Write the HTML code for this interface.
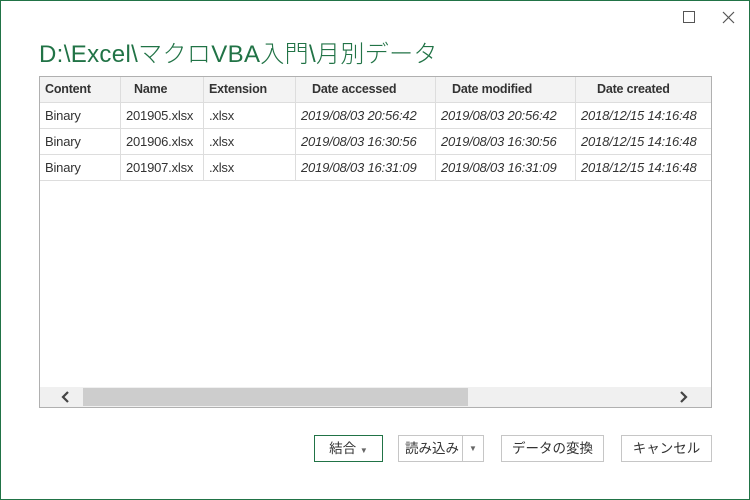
<!DOCTYPE html>
<html><head><meta charset="utf-8"><style>
*{margin:0;padding:0;box-sizing:border-box}
body{width:750px;height:500px;background:#fff;position:relative;overflow:hidden;font-family:"Liberation Sans","Noto Sans CJK JP",sans-serif;font-size:13px;color:#333}
.frame{position:absolute;left:0;top:0;width:750px;height:500px;border:1px solid #217346}
.title{position:absolute;left:39px;top:34px;font-size:24px;color:#217346;font-weight:300;letter-spacing:0.35px;white-space:nowrap}
.max{position:absolute;left:683px;top:11px;width:12px;height:12px;border:1px solid #555}
.tbl{position:absolute;left:39px;top:76px;width:673px;height:332px;border:1px solid #b0b0b0;overflow:hidden}
.row{position:absolute;left:0;height:26px;width:700px;border-bottom:1px solid #ddd}
.c{position:absolute;top:0;height:26px;line-height:25px;border-right:1px solid #ddd;padding-left:5px;white-space:nowrap;overflow:hidden;letter-spacing:-0.2px}
.hd{background:#f3f3f3}
.hd .c{font-weight:bold;color:#333;font-size:12.5px}
i{font-style:italic}
.sb{position:absolute;left:0;bottom:0;width:671px;height:20px;background:#f0f0f0}
.thumb{position:absolute;left:43px;top:1px;width:385px;height:18px;background:#cdcdcd}
.btn{position:absolute;top:435px;height:27px;border:1px solid #c6c6c6;text-align:center;line-height:25px;font-size:13.5px;color:#333;background:#fff}
.tri{font-size:8px;color:#666}
</style></head><body>
<div class="frame"></div>
<div class="max"></div>
<svg style="position:absolute;left:722px;top:11px" width="13" height="13"><path d="M1 1 L12 12 M12 1 L1 12" stroke="#555" stroke-width="1.2" fill="none"/></svg>
<div class="title">D:\Excel\マクロVBA入門\月別データ</div>
<div class="tbl">
<div class="row hd" style="top:0">
<div class="c" style="left:0;width:81px">Content</div>
<div class="c" style="left:81px;width:83px;padding-left:13px">Name</div>
<div class="c" style="left:164px;width:92px">Extension</div>
<div class="c" style="left:256px;width:140px;padding-left:16px">Date accessed</div>
<div class="c" style="left:396px;width:140px;padding-left:16px">Date modified</div>
<div class="c" style="left:536px;width:140px;padding-left:21px">Date created</div>
</div>
<div class="row" style="top:26px">
<div class="c" style="left:0;width:81px">Binary</div><div class="c" style="left:81px;width:83px">201905.xlsx</div><div class="c" style="left:164px;width:92px">.xlsx</div>
<div class="c" style="left:256px;width:140px"><i>2019/08/03 20:56:42</i></div><div class="c" style="left:396px;width:140px"><i>2019/08/03 20:56:42</i></div><div class="c" style="left:536px;width:140px"><i>2018/12/15 14:16:48</i></div></div>
<div class="row" style="top:52px">
<div class="c" style="left:0;width:81px">Binary</div><div class="c" style="left:81px;width:83px">201906.xlsx</div><div class="c" style="left:164px;width:92px">.xlsx</div>
<div class="c" style="left:256px;width:140px"><i>2019/08/03 16:30:56</i></div><div class="c" style="left:396px;width:140px"><i>2019/08/03 16:30:56</i></div><div class="c" style="left:536px;width:140px"><i>2018/12/15 14:16:48</i></div></div>
<div class="row" style="top:78px">
<div class="c" style="left:0;width:81px">Binary</div><div class="c" style="left:81px;width:83px">201907.xlsx</div><div class="c" style="left:164px;width:92px">.xlsx</div>
<div class="c" style="left:256px;width:140px"><i>2019/08/03 16:31:09</i></div><div class="c" style="left:396px;width:140px"><i>2019/08/03 16:31:09</i></div><div class="c" style="left:536px;width:140px"><i>2018/12/15 14:16:48</i></div></div>
<div class="sb"><div class="thumb"></div>
<svg style="position:absolute;left:20px;top:4px" width="12" height="12"><path d="M8 1 L3 6 L8 11" stroke="#444" stroke-width="2.2" fill="none"/></svg>
<svg style="position:absolute;left:637px;top:4px" width="12" height="12"><path d="M4 1 L9 6 L4 11" stroke="#444" stroke-width="2.2" fill="none"/></svg>
</div>
</div>
<div class="btn" style="left:314px;width:69px;border-color:#217346">結合 <span class="tri">▼</span></div>
<div class="btn" style="left:398px;width:86px;text-align:left;padding-left:6px">読み込み<span style="position:absolute;left:63px;top:0;height:25px;border-left:1px solid #c6c6c6;width:21px;text-align:center" class="tri">▼</span></div>
<div class="btn" style="left:501px;width:103px">データの変換</div>
<div class="btn" style="left:621px;width:91px">キャンセル</div>
</body></html>
